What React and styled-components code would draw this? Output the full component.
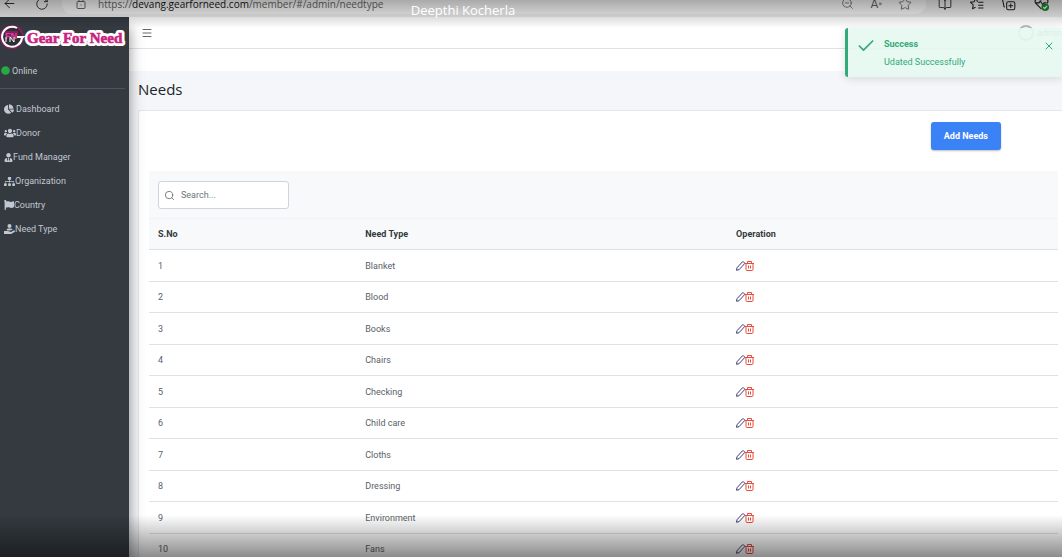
import React, { useState } from 'react'
import styled, { createGlobalStyle, css } from 'styled-components'
import { FaChartPie, FaUsers, FaUserTie, FaSitemap, FaFlag, FaCircle } from 'react-icons/fa'
import {
  ArrowLeft,
  RotateCw,
  ZoomOut,
  Star,
  BookOpen,
  Menu,
  Search,
  Check,
  X,
} from 'lucide-react'

const needs = [
  'Blanket',
  'Blood',
  'Books',
  'Chairs',
  'Checking',
  'Child care',
  'Cloths',
  'Dressing',
  'Environment',
  'Fans',
]

const HandUserIcon = () => (
  <svg viewBox="0 0 22 20" width="11" height="10" fill="currentColor" aria-hidden="true">
    <circle cx="11" cy="4" r="4" />
    <path d="M5 12c0-2 2-3 4-3h4c2 0 4 1 4 3z" />
    <path d="M0 14h5l2-1h5c2 0 2 2 0 2h-3v1h5l5-3c2-1 4 1 2 3l-5 3-2 1H0z" />
  </svg>
)

const menu = [
  { label: 'Dashboard', icon: <FaChartPie size={10} />, spaced: true },
  { label: 'Donor', icon: <FaUsers size={12} /> },
  { label: 'Fund Manager', icon: <FaUserTie size={9} /> },
  { label: 'Organization', icon: <FaSitemap size={11} /> },
  { label: 'Country', icon: <FaFlag size={10} /> },
  { label: 'Need Type', icon: <HandUserIcon /> },
]

const Pencil = () => (
  <svg viewBox="0 0 18 20" width="9" height="10" fill="none" stroke="#2b2a6b" strokeWidth="1.8" aria-hidden="true">
    <path d="M1 18.500l1-5L12.500 2c1-1 2-1 3 0l1 1c1 1 1 2 0 3L6 17.500z" strokeLinejoin="round" />
  </svg>
)

const Trash = () => (
  <svg viewBox="0 0 18 20" width="9" height="10" fill="none" stroke="#f0483c" strokeWidth="2" aria-hidden="true">
    <path d="M0 5h18M5 5V1h8v4M2 5v12c0 1 1 2 2 2h10c1 0 2-1 2-2V5M7 9v6M11 9v6" />
  </svg>
)

const Logo = () => (
  <svg viewBox="0 0 126 30" width="126" height="30" role="img" aria-label="Gear For Need">
    <circle cx="12" cy="15" r="11" fill="#2b2f36" stroke="#8d1c5a" strokeWidth="2" />
    <path d="M17 6a10 10 0 1 0 5 10l1-1h-6" fill="none" stroke="#fff" strokeWidth="2" />
    <path d="M5 9h13v5H5z" fill="#a01c70" opacity=".7" />
    <text x="5" y="17" fontFamily="Liberation Sans" fontWeight="700" fontSize="9" fill="#e83aa0">FN</text>
    <path d="M6 20v-5M10 20v-5l4 5v-5" stroke="#fff" strokeWidth="1" fill="none" />
    <text
      x="27"
      y="21"
      fontFamily="Liberation Serif"
      fontWeight="700"
      fontSize="15"
      stroke="#fff"
      strokeWidth="6"
      strokeLinejoin="round"
    >
      Gear For Need
    </text>
    <text
      x="27"
      y="21"
      fontFamily="Liberation Serif"
      fontWeight="700"
      fontSize="15"
      fill="#c8237f"
      stroke="#c8237f"
      strokeWidth=".6"
      aria-hidden="true"
    >
      Gear For Need
    </text>
  </svg>
)

const SiteInfo = () => (
  <svg viewBox="0 0 20 20" width="10" height="10" fill="none" stroke="currentColor" strokeWidth="2">
    <rect x="2" y="5" width="16" height="14" rx="2" />
    <path d="M6 5V1h8v4M9 12h2" />
  </svg>
)

const FavList = () => (
  <svg viewBox="0 0 24 24" width="14" height="14" fill="none" stroke="currentColor" strokeWidth="1.8">
    <path d="M13 8l-3-6-3 6-6 1 4.500 4.500L4.500 20l5-2.500M14 9h9M14 14h9M14 19h9" />
  </svg>
)

const Collections = () => (
  <svg viewBox="0 0 24 24" width="14" height="14" fill="none" stroke="currentColor" strokeWidth="1.8">
    <rect x="8" y="8" width="14" height="14" rx="3" />
    <path d="M15 11v8M11 15h8M5 17c-2 0-2-1-2-3L1 5" />
  </svg>
)

const Health = () => (
  <svg viewBox="0 0 24 24" width="15" height="15" fill="none" stroke="currentColor" strokeWidth="1.8">
    <path d="M12 21L3 12c-4-6 4-12 9-6 5-6 13 0 9 6M3 11h5l2-3 4 6 2-3h4" />
    <circle cx="18" cy="18" r="6" fill="#1b8a2f" stroke="none" />
    <path d="M15 18l2 2 4-4" stroke="#fff" />
  </svg>
)

const App = () => {
  const [search, setSearch] = useState('')
  const [toast, setToast] = useState(true)

  const rows = needs
    .map((name, i) => ({ id: i + 1, name }))
    .filter((row) => row.name.toLowerCase().includes(search.toLowerCase()))

  return (
    <Screen>
      <GlobalStyle />
      <BrowserBar>
        <BarTools>
          <BarButton aria-label="Back"><ArrowLeft size={15} strokeWidth={1.5} /></BarButton>
          <BarButton aria-label="Reload"><RotateCw size={14} strokeWidth={1.5} /></BarButton>
        </BarTools>
        <AddressBar>
          <SiteInfo />
          <Url>https://<b>devang.gearforneed.com</b>/member/#/admin/needtype</Url>
          <BarButton aria-label="Zoom out"><ZoomOut size={13} strokeWidth={1.5} /></BarButton>
          <BarButton aria-label="Read aloud">A<sup>»</sup></BarButton>
          <BarButton aria-label="Favourite"><Star size={14} strokeWidth={1.5} /></BarButton>
        </AddressBar>
        <BarTools>
          <BarButton aria-label="Split screen"><BookOpen size={14} strokeWidth={1.5} /></BarButton>
          <BarButton aria-label="Favourites"><FavList /></BarButton>
          <BarButton aria-label="Collections"><Collections /></BarButton>
          <BarButton aria-label="Performance"><Health /></BarButton>
        </BarTools>
      </BrowserBar>

      <Body>
        <Sidebar>
          <Brand href="#/admin"><Logo /></Brand>
          <Status><FaCircle size={9} color="#28a745" />Online</Status>
          <Nav>
            {menu.map((item) => (
              <NavItem key={item.label} href="#/admin" $spaced={item.spaced}>
                {item.icon}{item.label}
              </NavItem>
            ))}
          </Nav>
        </Sidebar>

        <Main>
          <TopNav>
            <PlainButton aria-label="Toggle menu"><Menu size={12} strokeWidth={2} /></PlainButton>
            <Account><Avatar />admin</Account>
          </TopNav>
          <Strip />
          <Title>Needs</Title>
          <Card>
            <Actions><AddButton>Add Needs</AddButton></Actions>
            <TableHeader>
              <SearchBox>
                <Search size={11} strokeWidth={2} />
                <input
                  type="text"
                  aria-label="Search"
                  placeholder="Search..."
                  value={search}
                  onChange={(e) => setSearch(e.target.value)}
                />
              </SearchBox>
            </TableHeader>
            <Table>
              <thead>
                <tr>
                  <th>S.No</th>
                  <th>Need Type</th>
                  <th>Operation</th>
                </tr>
              </thead>
              <tbody>
                {rows.map((row) => (
                  <tr key={row.id}>
                    <td>{row.id}</td>
                    <td>{row.name}</td>
                    <td>
                      <Operations>
                        <PlainButton aria-label={`Edit ${row.name}`}><Pencil /></PlainButton>
                        <PlainButton aria-label={`Delete ${row.name}`}><Trash /></PlainButton>
                      </Operations>
                    </td>
                  </tr>
                ))}
              </tbody>
            </Table>
          </Card>
        </Main>
      </Body>

      {toast && (
        <Toast role="alert">
          <Check size={20} strokeWidth={2} />
          <ToastText>
            <strong>Success</strong>
            <span>Udated Successfully</span>
          </ToastText>
          <CloseButton aria-label="Close" onClick={() => setToast(false)}>
            <X size={12} strokeWidth={2} />
          </CloseButton>
        </Toast>
      )}

      <TopShade><Presenter>Deepthi Kocherla</Presenter></TopShade>
      <BottomShade />
    </Screen>
  )
}

export default App

const GlobalStyle = createGlobalStyle`
  * {
    box-sizing: border-box;
  }
  body {
    margin: 0;
    overflow: hidden;
    font-family: Roboto, "Open Sans", sans-serif;
    font-size: 9px;
    line-height: 12px;
    color: #5a6168;
    background: #f4f6f9;
  }
  button, input {
    font: inherit;
    color: inherit;
  }
  svg {
    flex-shrink: 0;
  }
`
const plain = css`
  display: flex;
  align-items: center;
  padding: 0;
  border: 0;
  background: none;
  cursor: pointer;
`
const PlainButton = styled.button`
  ${plain}
`
const Screen = styled.div`
  position: relative;
  display: flex;
  flex-direction: column;
  height: 100vh;
  overflow: hidden;
`
const BrowserBar = styled.div`
  display: flex;
  align-items: center;
  flex-shrink: 0;
  height: 17px;
  padding: 0 13px 10px 2px;
  overflow: hidden;
  color: #222;
  background: #eee;
`
const BarButton = styled.button`
  ${plain}
  font-size: 12px;
  sup {
    font-size: 8px;
  }
`
const AddressBar = styled.div`
  display: flex;
  flex: 1;
  align-items: center;
  gap: 16px;
  height: 20px;
  margin: 0 12px 0 13px;
  padding: 0 14px;
  border-radius: 10px;
  color: #666;
  background: #fafafa;
`
const Url = styled.span`
  flex: 1;
  margin-left: -4px;
  font-family: "Open Sans", sans-serif;
  font-size: 10px;
  b {
    font-weight: normal;
    color: #111;
  }
`
const BarTools = styled.div`
  display: flex;
  gap: 18px;
`
const Body = styled.div`
  display: flex;
  flex: 1;
  min-height: 0;
`
const Sidebar = styled.aside`
  z-index: 1;
  flex: 0 0 129px;
  color: #c2c7d0;
  background: #343a40;
  box-shadow: 0 10px 16px rgba(0, 0, 0, .25), 0 10px 10px rgba(0, 0, 0, .22);
`
const Brand = styled.a`
  display: flex;
  padding: 5px 0 6px;
`
const Status = styled.div`
  display: flex;
  align-items: center;
  gap: 2px;
  height: 31px;
  margin-right: 4px;
  padding: 0 1px 5px;
  border-bottom: 1px solid #4b545c;
`
const Nav = styled.nav`
  display: flex;
  flex-direction: column;
  padding: 8px 4px;
`
const NavItem = styled.a`
  display: flex;
  align-items: center;
  gap: ${(props) => (props.$spaced ? '2px' : '0')};
  height: 24px;
  color: inherit;
  text-decoration: none;
`
const Main = styled.main`
  flex: 1;
  min-width: 0;
  background: #f4f6f9;
`
const TopNav = styled.header`
  display: flex;
  align-items: center;
  justify-content: space-between;
  height: 32px;
  padding: 0 0 0 12px;
  border-bottom: 1px solid #dee2e6;
  color: #666;
  background: #fff;
`
const Account = styled.div`
  display: flex;
  align-items: center;
  gap: 3px;
  color: #888;
`
const Avatar = styled.span`
  width: 16px;
  height: 16px;
  border: 2px solid #bbb;
  border-radius: 50%;
`
const Strip = styled.div`
  height: 22px;
  background: #fff;
`
const Title = styled.h1`
  margin: 0;
  padding: 8px 9px 11px;
  font-family: "Open Sans", sans-serif;
  font-size: 15px;
  font-weight: 500;
  line-height: 20px;
  color: #212529;
`
const Card = styled.section`
  margin-left: 9px;
  padding: 11px 4px 0 10px;
  border: 1px solid #e3e6ea;
  border-right: 0;
  border-radius: 3px 0 0 0;
  background: #fff;
`
const Actions = styled.div`
  display: flex;
  justify-content: flex-end;
  padding: 0 57px 21px 0;
`
const AddButton = styled.button`
  height: 28px;
  padding: 0 13px;
  border: 0;
  border-radius: 3px;
  font-weight: 700;
  color: #fff;
  background: #3b82f6;
  box-shadow: 0 1px 2px rgba(0, 0, 0, .25);
  cursor: pointer;
`
const TableHeader = styled.div`
  padding: 10px 9px 9px;
  background: #f8f9fa;
`
const SearchBox = styled.label`
  display: flex;
  align-items: center;
  gap: 6px;
  width: 131px;
  height: 28px;
  padding: 0 5px;
  border: 1px solid #ced4da;
  border-radius: 3px;
  color: #6c757d;
  background: #fff;
  input {
    width: 100%;
    padding: 0;
    border: 0;
    outline: 0;
    background: none;
  }
  input::placeholder {
    color: #6c757d;
  }
`
const Table = styled.table`
  width: 100%;
  table-layout: fixed;
  border-collapse: separate;
  border-spacing: 0;
  th, td {
    height: 32px;
    padding: 0 9px;
    border-bottom: 1px solid #dee2e6;
    text-align: left;
  }
  th {
    border-top: 1px solid #f0f2f4;
    font-weight: 700;
    color: #343a40;
    background: #f8f9fa;
  }
  th:first-child {
    width: 22.8%;
  }
  th:nth-child(2) {
    width: 40.8%;
  }
  tr:nth-child(even) td {
    height: 31px;
  }
`
const Operations = styled.div`
  display: flex;
  align-items: center;
`
const Toast = styled.div`
  position: absolute;
  top: 28px;
  right: 0;
  display: flex;
  align-items: flex-start;
  width: 217px;
  height: 49px;
  padding: 8px 7px 0 8px;
  border-left: 3px solid #34a97b;
  border-radius: 3px 0 0 3px;
  color: #34a97b;
  background: rgba(228, 248, 240, .9);
  box-shadow: 0 2px 8px rgba(0, 0, 0, .12);
  z-index: 2;
`
const ToastText = styled.div`
  display: flex;
  flex: 1;
  flex-direction: column;
  gap: 6px;
  padding: 2px 0 0 8px;
`
const CloseButton = styled(PlainButton)`
  height: 20px;
`
const Shade = styled.div`
  position: absolute;
  left: 0;
  right: 0;
  z-index: 3;
  pointer-events: none;
`
const TopShade = styled(Shade)`
  top: 0;
  height: 28px;
  background: linear-gradient(rgba(0, 0, 0, .32), rgba(0, 0, 0, .14) 60%, rgba(0, 0, 0, 0));
`
const BottomShade = styled(Shade)`
  bottom: 0;
  height: 42px;
  background: linear-gradient(rgba(0, 0, 0, 0), rgba(0, 0, 0, .45));
`
const Presenter = styled.div`
  padding-right: 136px;
  font-family: "Open Sans", sans-serif;
  font-size: 13px;
  line-height: 20px;
  text-align: center;
  color: #fff;
`
